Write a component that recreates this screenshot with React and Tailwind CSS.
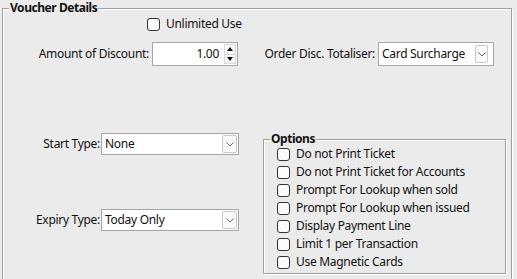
import React from "react";

const font = { fontFamily: '"Noto Sans", "Liberation Sans", sans-serif' };

function Check({ label }) {
  return (
    <div className="flex items-center h-[18px]">
      <span className="w-[13px] h-[13px] rounded-[3px] border border-[#333] bg-[#fbfbfb] shrink-0" />
      <span className="ml-[6px] whitespace-nowrap">{label}</span>
    </div>
  );
}

function Combo({ value, w, h, btn }) {
  return (
    <div className={`flex items-center bg-white border border-[#a6a6a6] ${w} ${h}`}>
      <span className="pl-[3px] flex-1 whitespace-nowrap">{value}</span>
      <span className={`h-[18px] border border-[#c8c8c8] rounded-[2px] bg-[#fafafa] flex items-center justify-center ${btn}`}>
        <svg width="8" height="5" viewBox="0 0 8 5">
          <path d="M0.5 0.5 L4 4 L7.5 0.5" fill="none" stroke="#555" strokeWidth="0.9" />
        </svg>
      </span>
    </div>
  );
}

export default function App() {
  const options = [
    "Do not Print Ticket",
    "Do not Print Ticket for Accounts",
    "Prompt For Lookup when sold",
    "Prompt For Lookup when issued",
    "Display Payment Line",
    "Limit 1 per Transaction",
    "Use Magnetic Cards",
  ];

  return (
    <div className="w-[517px] h-[279px] bg-[#ebebeb] overflow-hidden pl-[2px] pt-[8px] text-[12px] tracking-[-0.3px] text-[#111]" style={font}>
      {/* Voucher Details group */}
      <div className="relative w-[510px] h-[290px] border border-[#a0a0a0] shadow-[inset_1px_1px_0_#fff,1px_1px_0_#fff]">
        <span className="absolute left-[6px] top-[-10px] px-[1px] bg-[#ebebeb] font-bold tracking-[-0.45px] leading-[18px]">Voucher Details</span>

        <div className="pl-[144px] pt-[6px]">
          <Check label="Unlimited Use" />
        </div>

        <div className="flex items-center mt-[9px] h-[24px]">
          <span className="w-[147px] text-right pr-[1px] whitespace-nowrap">Amount of Discount:</span>
          <div className="ml-[2px] w-[86px] h-[24px] flex items-center bg-white border border-[#a6a6a6]">
            <span className="flex-1 text-right pr-[5px]">1.00</span>
            <div className="w-[12px] h-[20px] mr-[1px] flex flex-col border border-[#d8d8d8] bg-[#f7f7f7]">
              <div className="flex-1 flex items-center justify-center border-b border-[#d8d8d8]">
                <svg width="6" height="4" viewBox="0 0 6 4"><path d="M0 4 L3 0 L6 4 Z" fill="#111" /></svg>
              </div>
              <div className="flex-1 flex items-center justify-center">
                <svg width="6" height="4" viewBox="0 0 6 4"><path d="M0 0 L3 4 L6 0 Z" fill="#111" /></svg>
              </div>
            </div>
          </div>
          <span className="w-[140px] text-right pr-[3px] whitespace-nowrap">Order Disc. Totaliser:</span>
          <Combo value="Card Surcharge" w="w-[116px]" h="h-[24px]" btn="w-[13px] mr-[5px]" />
        </div>

        <div className="flex mt-[67px]">
          <div className="w-[260px] flex flex-col">
            <div className="flex items-center">
              <span className="w-[98px] text-right pr-[1px] whitespace-nowrap">Start Type:</span>
              <Combo value="None" w="w-[138px]" h="h-[22px]" btn="w-[15px] mr-[1px]" />
            </div>
            <div className="flex items-center mt-[54px]">
              <span className="w-[98px] text-right pr-[1px] whitespace-nowrap">Expiry Type:</span>
              <Combo value="Today Only" w="w-[138px]" h="h-[22px]" btn="w-[15px] mr-[1px]" />
            </div>
          </div>

          {/* Options group */}
          <div className="relative mt-[6px] w-[243px] h-[135px] border border-[#a0a0a0] shadow-[inset_1px_1px_0_#fff,1px_1px_0_#fff] pl-[13px] pt-[5px]">
            <span className="absolute left-[6px] top-[-10px] px-[1px] bg-[#ebebeb] font-bold tracking-[-0.45px] leading-[18px]">Options</span>
            {options.map((o) => (
              <Check key={o} label={o} />
            ))}
          </div>
        </div>
      </div>
    </div>
  );
}
